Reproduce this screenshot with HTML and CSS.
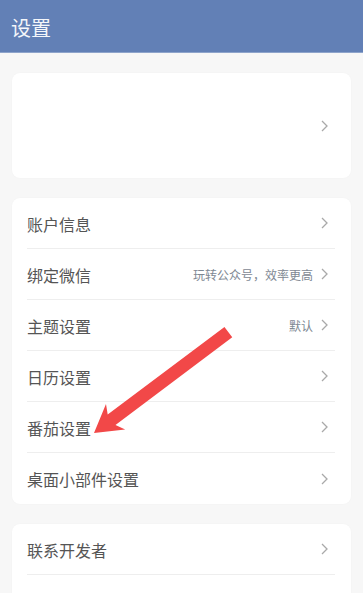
FILE: index.html
```html
<!DOCTYPE html>
<html lang="zh">
<head>
<meta charset="utf-8">
<link rel="stylesheet" href="styles.css">
</head>
<body>
<header class="topbar"><h1 class="title">设置</h1></header>
<main class="content">
  <section class="card profile">
    <div class="row profile-row">
      <span class="label"></span>
      <svg class="chev" viewBox="0 0 7 12"><path d="M1 1l5 5-5 5"/></svg>
    </div>
  </section>
  <section class="card">
    <div class="row"><span class="label">账户信息</span><span class="right"><svg class="chev" viewBox="0 0 7 12"><path d="M1 1l5 5-5 5"/></svg></span></div>
    <div class="row"><span class="label">绑定微信</span><span class="right"><span class="hint">玩转公众号，效率更高</span><svg class="chev" viewBox="0 0 7 12"><path d="M1 1l5 5-5 5"/></svg></span></div>
    <div class="row"><span class="label">主题设置</span><span class="right"><span class="hint">默认</span><svg class="chev" viewBox="0 0 7 12"><path d="M1 1l5 5-5 5"/></svg></span></div>
    <div class="row"><span class="label">日历设置</span><span class="right"><svg class="chev" viewBox="0 0 7 12"><path d="M1 1l5 5-5 5"/></svg></span></div>
    <div class="row"><span class="label">番茄设置</span><span class="right"><svg class="chev" viewBox="0 0 7 12"><path d="M1 1l5 5-5 5"/></svg></span></div>
    <div class="row"><span class="label">桌面小部件设置</span><span class="right"><svg class="chev" viewBox="0 0 7 12"><path d="M1 1l5 5-5 5"/></svg></span></div>
  </section>
  <section class="card">
    <div class="row"><span class="label">联系开发者</span><span class="right"><svg class="chev" viewBox="0 0 7 12"><path d="M1 1l5 5-5 5"/></svg></span></div>
    <div class="row"><span class="label">关于我们</span><span class="right"><svg class="chev" viewBox="0 0 7 12"><path d="M1 1l5 5-5 5"/></svg></span></div>
  </section>
</main>
<svg class="arrow" width="363" height="593" viewBox="0 0 363 593">
  <polygon transform="translate(94 433) rotate(-36.9)" points="0,0 27,-16 22,-6.5 168,-6.5 168,6.5 22,6.5 27,16"/>
</svg>
</body>
</html>
```

FILE: styles.css
```css
* { box-sizing: border-box; }
html, body { margin: 0; padding: 0; }
body {
  width: 363px;
  height: 593px;
  overflow: hidden;
  background: #f7f7f7;
  font-family: "Noto Sans CJK SC", "Noto Sans", sans-serif;
  position: relative;
}
.topbar {
  height: 53px;
  background: #6280b6;
  border-bottom: 1px solid #8ea4cb;
  display: flex;
  align-items: center;
  padding-left: 11px;
}
.title {
  margin: 0;
  font-size: 20px;
  font-weight: 400;
  color: #f4f6fa;
  line-height: 1;
  padding-top: 4px;
}
.content {
  padding: 20px 12px 0 12px;
  display: flex;
  flex-direction: column;
  gap: 20px;
}
.card {
  background: #ffffff;
  border-radius: 8px;
  width: 339px;
  padding: 0 16px 0 15px;
  box-shadow: 0 0 2px rgba(0,0,0,0.03);
}
.profile { height: 105px; display: flex; align-items: center; }
.profile-row { flex: 1; justify-content: flex-end; padding-right: 7px; }
.row {
  height: 51px;
  display: flex;
  align-items: center;
  justify-content: space-between;
  border-bottom: 1px solid #eeeeee;
}
.row:last-child { border-bottom: none; }
.label {
  font-size: 16px;
  color: #555555;
  padding-top: 1px;
}
.right {
  display: flex;
  align-items: center;
  gap: 8px;
  padding-right: 7px;
}
.hint {
  font-size: 12px;
  color: #7e8893;
}
.chev {
  width: 7px;
  height: 12px;
  fill: none;
  stroke: #a9a9a9;
  stroke-width: 1.3;
}
.arrow {
  position: absolute;
  left: 0;
  top: 0;
  pointer-events: none;
}
.arrow polygon { fill: #f24848; }
```
